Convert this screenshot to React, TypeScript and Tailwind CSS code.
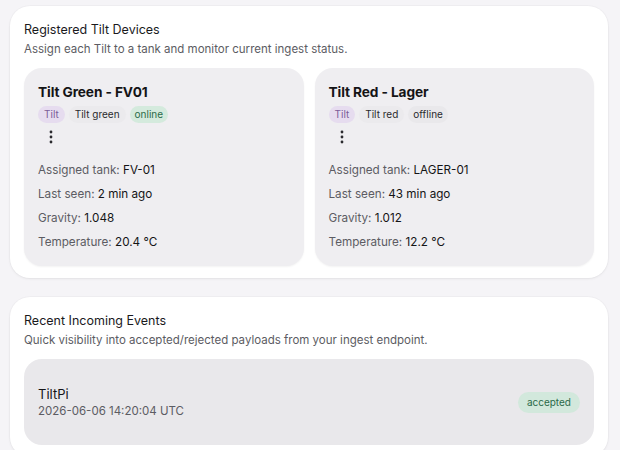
import React from "react";

const font = { fontFamily: "Inter, 'Noto Sans', sans-serif" };

function Dots() {
  return (
    <svg width="4" height="14" viewBox="0 0 4 14" className="block">
      <circle cx="2" cy="2" r="1.4" fill="#2a2a2e" />
      <circle cx="2" cy="7" r="1.4" fill="#2a2a2e" />
      <circle cx="2" cy="12" r="1.4" fill="#2a2a2e" />
    </svg>
  );
}

type Dev = {
  name: string;
  kind: string;
  status: string;
  online: boolean;
  tank: string;
  seen: string;
  gravity: string;
  temp: string;
};

const devices: Dev[] = [
  { name: "Tilt Green - FV01", kind: "Tilt green", status: "online", online: true, tank: "FV-01", seen: "2 min ago", gravity: "1.048", temp: "20.4 °C" },
  { name: "Tilt Red - Lager", kind: "Tilt red", status: "offline", online: false, tank: "LAGER-01", seen: "43 min ago", gravity: "1.012", temp: "12.2 °C" },
];

function DeviceCard({ d }: { d: Dev }) {
  return (
    <div className="flex-1 rounded-[18px] bg-[#efeef1] px-[14px] pt-[15px] pb-[16px] shadow-[0_1px_2px_rgba(0,0,0,0.05)]">
      <div className="text-[13.7px] font-bold leading-[18px] text-[#141416] tracking-[-0.1px]">{d.name}</div>
      <div className="mt-[5px] flex items-center gap-[4px] text-[10px] leading-[17px]">
        <span className="rounded-full bg-[#e6dcef] px-[6px] text-[#7c5d98]">Tilt</span>
        <span className="rounded-full bg-[#ebeaed] px-[6px] text-[#2a2a2e]">{d.kind}</span>
        {d.online ? (
          <span className="rounded-full bg-[#d4eadd] px-[5px] text-[#2b6a49]">{d.status}</span>
        ) : (
          <span className="rounded-full bg-[#e9e8eb] px-[5px] text-[#2a2a2e]">{d.status}</span>
        )}
      </div>
      <div className="mt-[6px] pl-[11px] h-[16px] flex items-center">
        <Dots />
      </div>
      <div className="mt-[17px] flex flex-col gap-[8px] text-[11.7px] leading-[16px]">
        <div><span className="text-[#5c5c63]">Assigned tank: </span><span className="text-[#141416]">{d.tank}</span></div>
        <div><span className="text-[#5c5c63]">Last seen: </span><span className="text-[#141416]">{d.seen}</span></div>
        <div><span className="text-[#5c5c63]">Gravity: </span><span className="text-[#141416]">{d.gravity}</span></div>
        <div><span className="text-[#5c5c63]">Temperature: </span><span className="text-[#141416]">{d.temp}</span></div>
      </div>
    </div>
  );
}

export default function App() {
  return (
    <div style={font} className="min-h-[450px] w-[620px] bg-[#f5f4f7] pl-[10px] pr-[12px] pt-[6px] overflow-hidden">
      <div className="rounded-[20px] bg-white px-[14px] pt-[16px] pb-[12px] shadow-[0_0_0_1px_rgba(0,0,0,0.02),0_1px_3px_rgba(0,0,0,0.06)]">
        <div className="text-[12.5px] leading-[16px] text-[#1a1a1d]">Registered Tilt Devices</div>
        <div className="mt-[3px] text-[11.5px] leading-[16px] text-[#5c5c63]">Assign each Tilt to a tank and monitor current ingest status.</div>
        <div className="mt-[11px] flex gap-[11px]">
          {devices.map((d) => (
            <DeviceCard key={d.name} d={d} />
          ))}
        </div>
      </div>
      <div className="mt-[19px] rounded-[20px] bg-white px-[14px] pt-[16px] pb-[12px] shadow-[0_0_0_1px_rgba(0,0,0,0.02),0_1px_3px_rgba(0,0,0,0.06)]">
        <div className="text-[12.5px] leading-[16px] text-[#1a1a1d]">Recent Incoming Events</div>
        <div className="mt-[3px] text-[11.5px] leading-[16px] text-[#5c5c63]">Quick visibility into accepted/rejected payloads from your ingest endpoint.</div>
        <div className="mt-[11px] flex items-center justify-between rounded-[18px] bg-[#e9e8eb] pl-[14px] pr-[14px] h-[86px]">
          <div>
            <div className="text-[13px] leading-[18px] text-[#141416]">TiltPi</div>
            <div className="text-[11.5px] leading-[16px] text-[#5c5c63]">2026-06-06 14:20:04 UTC</div>
          </div>
          <span className="rounded-full bg-[#d2e8dc] px-[9px] text-[10px] leading-[21px] text-[#2b6a49]">accepted</span>
        </div>
      </div>
    </div>
  );
}
